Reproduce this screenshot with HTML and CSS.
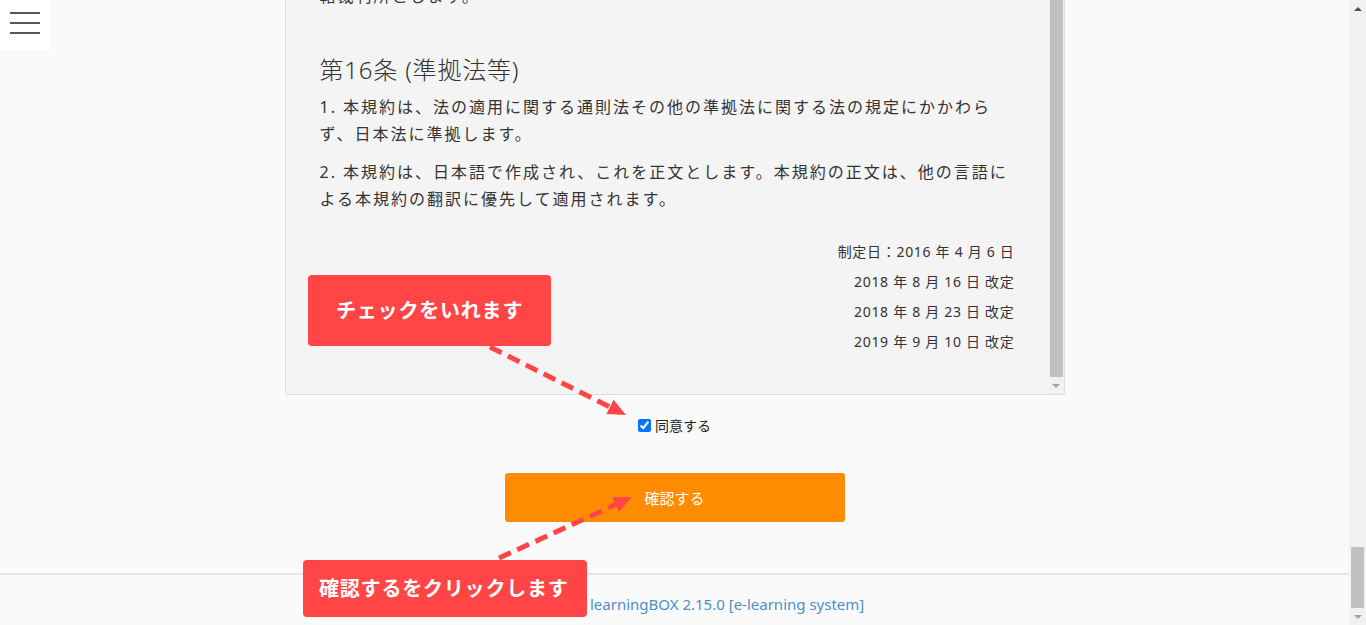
FILE: index.html
```html
<!DOCTYPE html>
<html lang="ja">
<head>
<meta charset="utf-8">
<title>利用規約</title>
<link rel="stylesheet" href="styles.css">
</head>
<body>
<div class="page">
  <main class="main">
    <button class="menu-btn" aria-label="メニュー"><span></span><span></span><span></span></button>

    <div class="container">
      <section class="terms">
        <div class="terms-body">
          <p class="cut">轄裁判所とします。</p>
          <h3 class="art-title">第16条 (準拠法等)</h3>
          <p class="art-p">1. 本規約は、法の適用に関する通則法その他の準拠法に関する法の規定にかかわらず、日本法に準拠します。</p>
          <p class="art-p">2. 本規約は、日本語で作成され、これを正文とします。本規約の正文は、他の言語による本規約の翻訳に優先して適用されます。</p>
          <div class="dates">
            <p>制定日：2016 年 4 月 6 日</p>
            <p>2018 年 8 月 16 日 改定</p>
            <p>2018 年 8 月 23 日 改定</p>
            <p>2019 年 9 月 10 日 改定</p>
          </div>
        </div>
        <div class="vscroll">
          <div class="thumb"></div>
          <div class="sbtn"><span class="arrow-down"></span></div>
        </div>
      </section>

      <label class="agree"><input type="checkbox" checked><span>同意する</span></label>

      <button class="confirm">確認する</button>
    </div>

    <footer class="footer">
      <a class="footer-link" href="#">learningBOX 2.15.0 [e-learning system]</a>
    </footer>

    <svg class="arrows" width="1349" height="625" viewBox="0 0 1349 625" aria-hidden="true">
      <line x1="490" y1="347" x2="610" y2="407" class="dash"/>
      <polygon points="626,415 606.4,413.9 613.6,399.7" class="head"/>
      <line x1="499" y1="558" x2="616" y2="504.5" class="dash"/>
      <polygon points="632,497 618.9,511.8 612.3,497.2" class="head"/>
    </svg>

    <div class="callout callout-check">チェックをいれます</div>
    <div class="callout callout-confirm">確認するをクリックします</div>
  </main>

  <div class="page-scroll">
    <div class="sbtn sbtn-page"><span class="arrow-up"></span></div>
    <div class="track-space"></div>
    <div class="page-thumb"></div>
    <div class="sbtn sbtn-page"><span class="arrow-down"></span></div>
  </div>
</div>
</body>
</html>
```
FILE: styles.css
```css
* { box-sizing: border-box; }

html, body {
  margin: 0;
  height: 100%;
}

body {
  font-family: "Noto Sans", "Noto Sans CJK JP", sans-serif;
  color: #333;
  background: #fafafa;
  overflow: hidden;
}

.page {
  display: flex;
  height: 625px;
}

.main {
  flex: 1;
  position: relative;
  display: flex;
  flex-direction: column;
  height: 625px;
  overflow: hidden;
}

/* hamburger */
.menu-btn {
  position: absolute;
  top: 0;
  left: 0;
  width: 50px;
  height: 50px;
  background: #fff;
  border: 0;
  padding: 12px 10px 0;
  display: flex;
  flex-direction: column;
  gap: 8px;
  z-index: 5;
}
.menu-btn span {
  display: block;
  height: 2px;
  background: #555;
}

.container {
  width: 780px;
  margin: 0 auto;
}

/* terms box */
.terms {
  height: 395px;
  display: flex;
  background: #f4f4f4;
  border: 1px solid #ddd;
  border-top: 0;
  border-radius: 0 0 3px 3px;
  overflow: hidden;
}
.terms-body {
  flex: 1;
  padding: 0 34px;
  overflow: hidden;
}
.cut {
  margin: -17px 0 0;
  font-size: 16px;
  line-height: 27px;
  letter-spacing: 2px;
}
.art-title {
  margin: 43px 0 0;
  font-size: 24px;
  line-height: 34px;
  font-weight: 300;
  letter-spacing: 0.8px;
}
.art-p {
  margin: 7px 0 0;
  font-size: 16px;
  line-height: 27px;
  letter-spacing: 2px;
}
.art-p + .art-p { margin-top: 11px; }
.dates {
  margin-top: 24px;
  text-align: right;
  font-size: 14px;
  line-height: 30px;
  letter-spacing: 0.7px;
}
.dates p { margin: 0; }

/* fake scrollbars */
.vscroll {
  width: 15px;
  background: #f1f1f1;
  display: flex;
  flex-direction: column;
}
.vscroll .thumb {
  flex: 1;
  margin: 0 1px;
  background: #c1c1c1;
}
.sbtn {
  height: 17px;
  display: flex;
  align-items: center;
  justify-content: center;
}
.arrow-down {
  width: 0;
  height: 0;
  border-left: 4px solid transparent;
  border-right: 4px solid transparent;
  border-top: 4px solid #a3a3a3;
}
.arrow-up {
  width: 0;
  height: 0;
  border-left: 4px solid transparent;
  border-right: 4px solid transparent;
  border-bottom: 4px solid #505050;
}
.page-scroll {
  width: 17px;
  height: 625px;
  background: #f1f1f1;
  display: flex;
  flex-direction: column;
}
.track-space { flex: 1; }
.page-thumb {
  height: 61px;
  margin: 0 2px;
  background: #c1c1c1;
}

/* agree */
.agree {
  display: flex;
  justify-content: center;
  align-items: center;
  height: 20px;
  margin-top: 20px;
  font-size: 14px;
  color: #222;
}
.agree input {
  margin: 0 4px 0 0;
  width: 13px;
  height: 13px;
}

/* confirm button */
.confirm {
  display: block;
  width: 340px;
  height: 49px;
  margin: 38px auto 0;
  background: #ff8c00;
  color: #fff;
  border: 0;
  border-radius: 3px;
  font-family: "Noto Sans", "Noto Sans CJK JP", sans-serif;
  font-size: 15px;
}

/* footer */
.footer {
  margin-top: auto;
  height: 52px;
  border-top: 2px solid #e6e6e6;
  padding: 19px 0 0 590px;
  font-size: 15px;
  line-height: 20px;
}
.footer-link {
  color: #4a90c8;
  text-decoration: none;
}

/* annotations */
.arrows {
  position: absolute;
  top: 0;
  left: 0;
  pointer-events: none;
}
.dash {
  stroke: #ff4545;
  stroke-width: 5;
  stroke-dasharray: 13 7;
}
.head { fill: #ff4545; }

.callout {
  position: absolute;
  background: #ff4545;
  color: #fff;
  font-family: "Noto Sans CJK JP", sans-serif;
  font-size: 20px;
  font-weight: bold;
  letter-spacing: 0.8px;
  line-height: 30px;
  border-radius: 4px;
}
.callout-check {
  top: 275px;
  left: 308px;
  width: 243px;
  height: 71px;
  padding: 20px 0 0 28px;
}
.callout-confirm {
  top: 560px;
  left: 303px;
  width: 284px;
  height: 57px;
  padding: 13px 0 0 16px;
}
```
